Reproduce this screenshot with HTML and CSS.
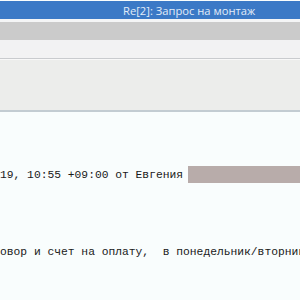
FILE: index.html
```html
<!DOCTYPE html>
<html lang="ru">
<head>
    <meta charset="UTF-8">
    <title>Re[2]: Запрос на монтаж</title>
    <link rel="stylesheet" href="styles.css">
</head>
<body>
    <div class="window">
        <div class="titlebar">
            <span class="title">Re[2]: Запрос на монтаж</span>
        </div>
        <div class="ribbon"></div>
        <div class="toolbar"></div>
        <div class="header-panel"></div>
        <div class="message">
            <div class="line meta">
                <span class="meta-text">19, 10:55 +09:00 от Евгения</span>
                <span class="redacted"></span>
            </div>
            <div class="line body-line">овор и счет на оплату,  в понедельник/вторник</div>
        </div>
    </div>
</body>
</html>
```

FILE: styles.css
```css
body {
    margin: 0;
    padding: 0;
    background-color: #f9fdfd;
    overflow: hidden;
}

.window {
    width: 300px;
    height: 300px;
    display: flex;
    flex-direction: column;
}

.titlebar {
    margin-top: 1px;
    height: 18px;
    background-color: #3b79c6;
    border-bottom: 3px solid #f4f5f6;
    display: flex;
    align-items: center;
    padding-left: 123px;
}

.title {
    font-family: "Open Sans", "Noto Sans", sans-serif;
    font-size: 11.2px;
    color: #e2ecf8;
    white-space: nowrap;
}

.ribbon {
    height: 18px;
    background-color: #cbcbcb;
}

.toolbar {
    height: 18px;
    background-color: #f2f2f3;
    border-bottom: 1px solid #c9cbce;
}

.header-panel {
    height: 50px;
    background-color: #ecedeb;
    border-top: 1px solid #f8f8f8;
    border-bottom: 2px solid #c3ccd2;
}

.message {
    display: flex;
    flex-direction: column;
    padding-top: 54px;
}

.line {
    font-family: "Liberation Mono", "Courier New", monospace;
    font-size: 11.3px;
    color: #1a1a1a;
    white-space: pre;
    overflow: hidden;
}

.meta {
    display: flex;
    align-items: center;
    height: 17px;
}

.redacted {
    margin-left: 5px;
    flex: 1;
    height: 17px;
    background-color: #b8acaa;
}

.body-line {
    margin-top: 63px;
}
```
